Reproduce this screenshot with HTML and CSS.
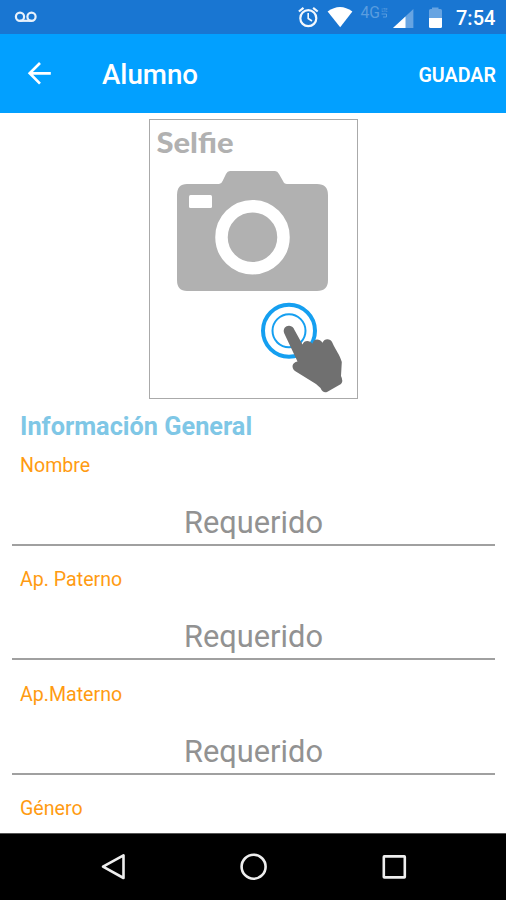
FILE: index.html
```html
<!DOCTYPE html>
<html lang="es">
<head>
<meta charset="utf-8">
<title>Alumno</title>
<link rel="stylesheet" href="styles.css">
</head>
<body>
<div class="screen">
  <div class="status">
    <svg class="voicemail" width="24" height="14" viewBox="0 0 24 14" fill="none" stroke="#e8f1fb" stroke-width="2.200"><circle cx="6" cy="6.700" r="4.100"/><circle cx="17.500" cy="6.700" r="4.100"/><path d="M6 10.800H17.500"/></svg>
    <svg width="144" height="34" viewBox="298 0 144 34">
      <g fill="none" stroke="#f3f8fd" stroke-width="2.200"><circle cx="308.300" cy="18.200" r="8"/><path d="M298.900 11.500L303.500 7.800M313.100 7.800L317.700 11.500" stroke-width="2.200"/><path d="M308.200 13V18.500L312 21" stroke-width="1.600"/></g>
      <path d="M327.600 11.600Q340 2.500 352.400 11.600L340.200 27.200Z" fill="#fff"/>
      <text class="net" x="360.500" y="18" textLength="19.500" lengthAdjust="spacingAndGlyphs">4G</text>
      <text class="lte" x="381.500" y="12" textLength="6" lengthAdjust="spacingAndGlyphs">LTE</text>
      <path d="M381.500 14H386.500V17H383" fill="none" stroke="#5a9ddf"/>
      <path d="M413.400 9V28H393Z" fill="#67a4e2"/><path d="M405.500 16.500V28H393Z" fill="#fff"/>
      <path d="M429 18V10.500Q429 9 430.500 9H432V7.500H438.500V9H440.500Q442 9 442 10.500V18Z" fill="#67a4e2"/><path d="M429 18H442V26.500Q442 28 440.500 28H430.500Q429 28 429 26.500Z" fill="#fff"/>
    </svg>
    <span class="time">7:54</span>
  </div>
  <header class="appbar">
    <svg class="back" width="24" height="24" viewBox="0 0 24 24" fill="none" stroke="#fff" stroke-width="2.700"><path d="M23.800 11.300H2.500M13 1L2.700 11.300L13 21.600"/></svg>
    <h1>Alumno</h1>
    <span class="save">GUADAR</span>
  </header>
  <main>
    <div class="photo">
      <svg width="207" height="278" viewBox="150 120 207 278">
        <text class="selfie" x="156.500" y="152.800" textLength="77" lengthAdjust="spacingAndGlyphs">Selfie</text>
        <path fill="#b1b1b1" d="M187 184H219Q221.500 184 222.600 181L226 174Q227.500 171 230 171H275Q277.500 171 279 174L283 181Q284 184 287 184H317Q328 184 328 195V280Q328 291 317 291H187Q177 291 177 280V195Q177 184 187 184Z"/>
        <rect x="189" y="195" width="23" height="13" rx="1.500" fill="#fff"/>
        <circle cx="252.500" cy="237.200" r="31" fill="none" stroke="#fff" stroke-width="12.500"/>
        <g fill="none" stroke="#159ff0"><circle cx="289" cy="330.800" r="26" stroke-width="4"/><circle cx="289" cy="330.800" r="16.500" stroke-width="2"/></g>
        <path fill="#707070" d="M284.300 333.500C282.300 328.500 286 325.500 289.200 325.700C292 325.900 293.500 327.500 294.500 330L302.500 344.500C304 340.300 309.500 340 312.300 343.700C313.500 338.300 319.500 338 322.500 342.700C324.500 337.800 330.500 338.500 332.300 342.500C336 351 339.500 354 341.800 362L341 376Q343.500 381 341 384L327 392Q323 393.500 320.500 388L316 384L295 371C291 367.500 292 362.500 297.500 361.500Z"/>
      </svg>
    </div>
    <h2>Información General</h2>
    <div class="field"><label>Nombre</label><div class="input">Requerido</div></div>
    <div class="field"><label>Ap. Paterno</label><div class="input">Requerido</div></div>
    <div class="field"><label>Ap.Materno</label><div class="input">Requerido</div></div>
    <div class="field"><label>Género</label></div>
  </main>
  <nav>
    <svg width="506" height="66" viewBox="0 0 506 66" fill="none" stroke="#eee" stroke-width="2.600" stroke-linejoin="round"><path d="M123.500 21.300V44L103 32.700Z"/><circle cx="253.600" cy="32.700" r="12"/><rect x="383.800" y="22.400" width="21" height="21" rx=".5"/></svg>
  </nav>
</div>
</body>
</html>
```
FILE: styles.css
```css
* { box-sizing: border-box; margin: 0; padding: 0; }
body { font-family: Roboto, "Liberation Sans", sans-serif; background: #fff; }
svg { display: block; flex: none; }
.screen { width: 506px; height: 900px; display: flex; flex-direction: column; overflow: hidden; }
.status { height: 34px; flex: none; background: #1976d2; display: flex; align-items: center; padding: 0 11px 0 14px; }
.voicemail { margin-right: auto; }
.time { color: #fff; font-size: 20px; font-weight: 500; line-height: 34px; margin-left: 14px; width: 39px; white-space: nowrap; padding-top: 2px; }
.net { font-size: 16px; fill: #5a9ddf; }
.lte { font-size: 5px; font-weight: 500; fill: #5a9ddf; }
.appbar { height: 79px; flex: none; background: #02a0ff; color: #fff; display: flex; align-items: center; padding: 0 10px 0 27px; }
.appbar h1 { font-size: 27.700px; font-weight: 500; margin-left: 51px; padding-top: 2px; }
.save { margin-left: auto; font-size: 19.700px; font-weight: 600; padding-top: 3px; }
main { flex: 1; min-height: 0; overflow: hidden; padding: 6px 11px 0 12px; }
.photo { width: 209px; height: 280px; border: 1px solid #aaa; margin: 0 auto 0 137px; }
.selfie { font-family: Lato, sans-serif; font-size: 29px; font-weight: 900; fill: #b1b1b1; }
h2 { font-size: 25.300px; line-height: 30px; font-weight: 700; color: #7fc7e6; margin: 13px 0 0 8px; }
.field { height: 114.300px; padding-top: 11px; }
.field label { display: block; font-size: 19.600px; line-height: 26px; color: #ff9b12; margin-left: 8px; }
.input { height: 67px; padding-top: 25px; line-height: 38px; border-bottom: 2px solid #a0a0a0; text-align: center; font-size: 30.800px; color: #929292; }
nav { height: 67px; flex: none; background: #000; border-top: 1px solid #555; }
```
